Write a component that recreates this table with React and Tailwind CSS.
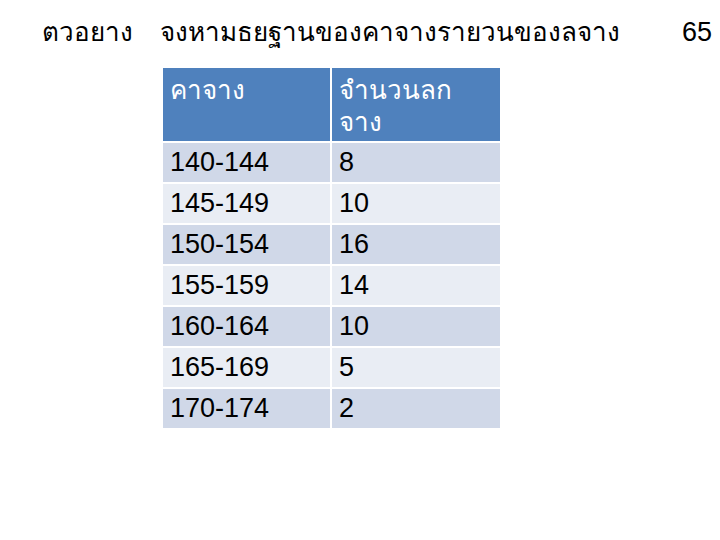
const rows = [
  ['140-144', '8'],
  ['145-149', '10'],
  ['150-154', '16'],
  ['155-159', '14'],
  ['160-164', '10'],
  ['165-169', '5'],
  ['170-174', '2'],
]

export default function App() {
  return (
    <div
      className="w-[720px] h-[540px] bg-white text-black overflow-hidden"
      style={{ fontFamily: '"Liberation Sans", Arial, sans-serif' }}
    >
      <div className="flex items-center h-[64px] text-[26px] leading-none">
        <span className="ml-[42px] w-[118px]">ตวอยาง</span>
        <span className="flex-1">จงหามธยฐานของคาจางรายวนของลจาง</span>
        <span className="mr-[8px] text-[27px]">65</span>
      </div>

      <div className="ml-[163px] mt-[4px] w-[337px] flex flex-col gap-[2px] text-[27px] leading-none">
        <div className="grid grid-cols-[167px_168px] gap-[2px] h-[73px] text-white text-[26px]">
          <div className="bg-[#4f81bd] px-[7px] pt-[6px] leading-[32px]">คาจาง</div>
          <div className="bg-[#4f81bd] px-[7px] pt-[6px] leading-[32px]">
            จำนวนลก
            <br />
            จาง
          </div>
        </div>
        {rows.map(([a, b], i) => (
          <div key={a} className="grid grid-cols-[167px_168px] gap-[2px] h-[39px]">
            <div className={`${i % 2 === 0 ? 'bg-[#d0d8e8]' : 'bg-[#e9edf4]'} px-[7px] flex items-center`}>{a}</div>
            <div className={`${i % 2 === 0 ? 'bg-[#d0d8e8]' : 'bg-[#e9edf4]'} px-[7px] flex items-center`}>{b}</div>
          </div>
        ))}
      </div>
    </div>
  )
}
